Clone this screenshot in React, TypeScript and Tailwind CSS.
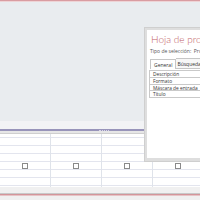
import React from 'react';

const rows = ['Descripción', 'Formato', 'Máscara de entrada', 'Título'];
const cols = [0, 1, 2, 3];
const gridRows = [0, 1, 2, 3, 4, 5];

function PropertySheet() {
  return (
    <div className="absolute left-[144px] top-[27px] w-[60px] h-[135px] bg-[#dedede] border border-[#cfcfcf] pl-[2px] pt-[2px] pb-[3px]">
      <div className="h-full bg-white flex flex-col overflow-hidden">
        <div className="pl-[4px] pt-[3px] font-['Lato',sans-serif] text-[10px] leading-[12px] font-light text-[#bf5d66] whitespace-nowrap">
          Hoja de propiedades
        </div>
        <div className="pl-[3px] mt-[3px] text-[5px] leading-[6px] text-[#555] whitespace-nowrap">
          Tipo de selección:&nbsp; Propiedades del campo
        </div>
        <div className="mt-[4px] flex items-end pl-[3px] text-[5px] leading-[6px] text-[#333] whitespace-nowrap">
          <div className="px-[3px] pt-[2px] pb-[1px] border border-b-0 border-[#c6c6c6] bg-white">General</div>
          <div className="px-[1px] pt-[2px] pb-[1px] border border-l-0 border-[#c6c6c6] bg-[#f7f7f7]">Búsqueda</div>
        </div>
        <div className="ml-[2px] mt-[1px] border-l border-t border-[#c9c9c9] flex flex-col">
          {rows.map((r) => (
            <div
              key={r}
              className="h-[6.75px] border-b border-[#c9c9c9] pl-[3px] text-[4.8px] leading-[6px] text-[#333] whitespace-nowrap"
            >
              {r}
            </div>
          ))}
        </div>
      </div>
    </div>
  );
}

function Grid() {
  return (
    <div className="h-[53px] bg-white flex">
      <div className="w-[2px] flex flex-col">
        <div className="h-[4px]" />
        <div className="h-[8px] bg-[#9a9a9a]" />
      </div>
      {cols.map((c) => (
        <div key={c} className="w-[51px] shrink-0 border-r border-[#dfe3ea] flex flex-col">
          <div className="h-[4px] border-b border-[#e3e5ee]" />
          {gridRows.map((r) => (
            <div key={r} className="h-[8px] border-b border-[#e3e5ee] flex items-center justify-center">
              {r === 3 && <div className="w-[6px] h-[6px] border border-[#8a8a8a] bg-white" />}
            </div>
          ))}
        </div>
      ))}
    </div>
  );
}

export default function App() {
  return (
    <div className="relative w-[200px] h-[200px] overflow-hidden bg-[#f0f0f0] font-['Open_Sans',sans-serif]">
      <div className="h-[1px] bg-[#d99ca1]" />
      <div className="h-[1px] bg-[#eed3d5]" />
      <div className="h-[119px] bg-[#e9ecef]" />
      <div className="h-[8px] bg-[#f2f3f5]" />
      <div className="h-[2px] bg-[#9894ba] flex justify-center">
        <div className="w-[10px] h-[1px] mt-[1px] ml-[8px] border-t border-dotted border-[#d8d6e8]" />
      </div>
      <div className="h-[2px] bg-[#e6e6e6]" />
      <div className="h-[1px] bg-[#cfcfcf]" />
      <Grid />
      <div className="h-[6px] bg-[#f0f0f0]" />
      <div className="h-[1px] bg-[#c8c8c8]" />
      <div className="h-[1px] bg-[#d3959a]" />
      <div className="h-[1px] bg-[#e6c4c6]" />
      <div className="h-[4px] bg-[#f0f0f0]" />
      <PropertySheet />
    </div>
  );
}
